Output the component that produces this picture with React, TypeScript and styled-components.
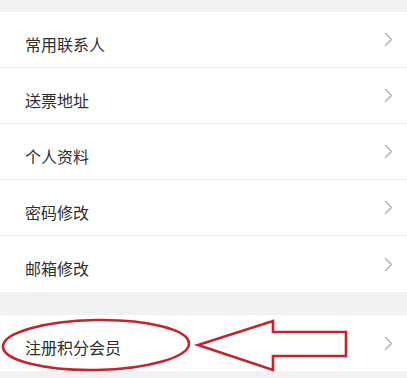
import React from "react";
import styled, { createGlobalStyle } from "styled-components";

const Global = createGlobalStyle`
  html, body { margin: 0; padding: 0; background: #f1f1f4; }
  body { font-family: "Noto Sans CJK SC", "Noto Sans", sans-serif; }
  #root { min-height: 100vh; }
`;

const Page = styled.div`
  position: relative;
  width: 407px;
  height: 378px;
  overflow: hidden;
  background: #f1f1f4;
  padding-top: 12px;
  box-sizing: border-box;
  display: flex;
  flex-direction: column;
  gap: 23px;
`;

const Group = styled.div`
  background: #ffffff;
  display: flex;
  flex-direction: column;
`;

const Row = styled.div<{ $last?: boolean }>`
  height: 56px;
  box-sizing: border-box;
  display: flex;
  align-items: center;
  justify-content: space-between;
  padding: 0 14px 0 25px;
  border-bottom: ${(p) => (p.$last ? "none" : "1px solid #ebebee")};
`;

const Label = styled.span`
  font-size: 16px;
  color: #2e2e2e;
  letter-spacing: 0;
  padding-top: 8px;
  line-height: 20px;
`;

const Overlay = styled.svg`
  position: absolute;
  left: 0;
  top: 0;
  pointer-events: none;
`;

const Chevron = () => (
  <svg width="9" height="15" viewBox="0 0 9 15">
    <path d="M1.5 1.5 L7.5 7.5 L1.5 13.5" fill="none" stroke="#b5b5b8" strokeWidth="1.6" strokeLinecap="round" strokeLinejoin="round" />
  </svg>
);

const items = ["常用联系人", "送票地址", "个人资料", "密码修改", "邮箱修改"];

export default function App() {
  return (
    <>
      <Global />
      <Page>
        <Group>
          {items.map((t, i) => (
            <Row key={t} $last={i === items.length - 1}>
              <Label>{t}</Label>
              <Chevron />
            </Row>
          ))}
        </Group>
        <Group>
          <Row $last>
            <Label>注册积分会员</Label>
            <Chevron />
          </Row>
        </Group>
        <Overlay width="407" height="378" viewBox="0 0 407 378">
          <ellipse cx="96" cy="345" rx="93" ry="25" fill="none" stroke="#c3242e" strokeWidth="2.6" transform="rotate(-1 96 345)" />
          <path
            d="M198 345 L273 321 L273 332 L346 332 L346 356 L273 356 L273 370 Z"
            fill="none"
            stroke="#c3242e"
            strokeWidth="2.6"
            strokeLinejoin="miter"
          />
        </Overlay>
      </Page>
    </>
  );
}
